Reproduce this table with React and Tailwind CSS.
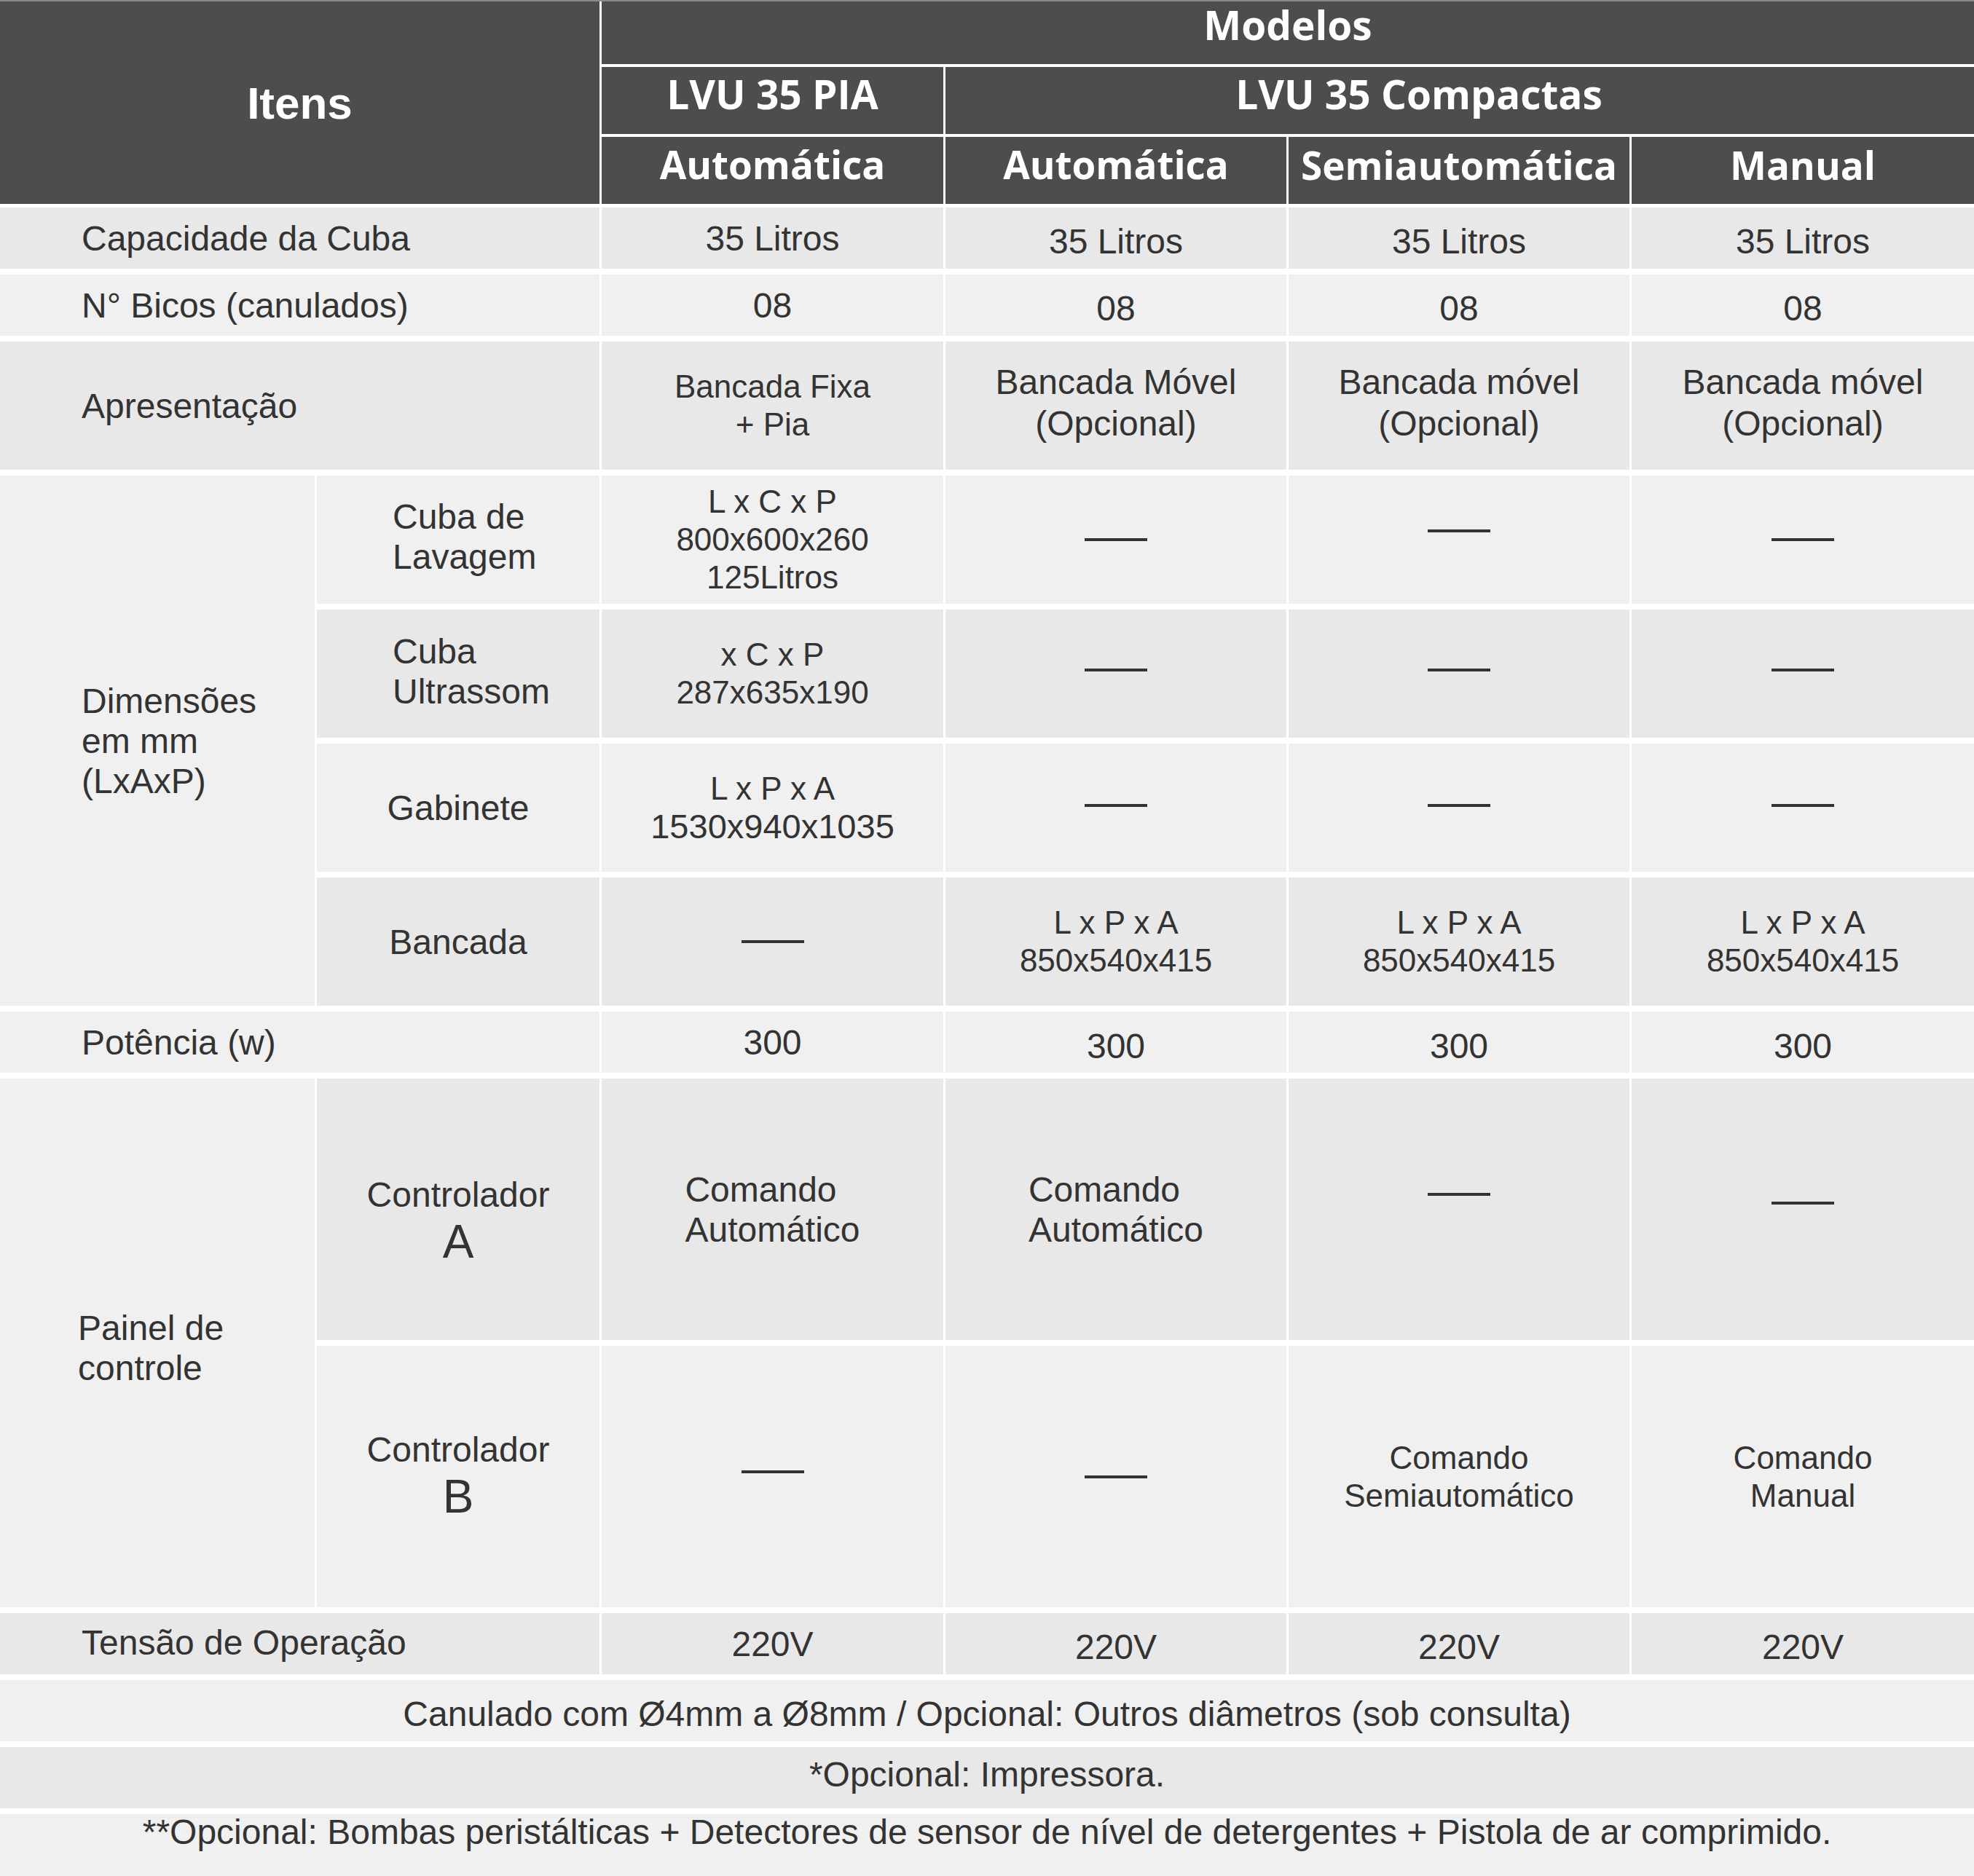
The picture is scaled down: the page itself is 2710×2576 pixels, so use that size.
import React from "react";

const DARK = "bg-[#e8e8e8]";
const LIGHT = "bg-[#f0f0f0]";
const HEAD = "bg-[#4d4d4f] text-white flex items-center justify-center";
const HEAD_FONT = "font-['Open_Sans',sans-serif] font-bold text-[55px] leading-none";
const HEAD_FONT_SM = "font-['Open_Sans',sans-serif] font-bold text-[53px] leading-none";
const COLS = "grid grid-cols-[432px_388px_469px_468px_468px_470px] gap-x-[3px]";

// left aligned label in the "Itens" column
const Label = ({ bg, span, children, className = "" }) => (
  <div className={`${bg} ${span ? "col-span-2" : ""} flex items-center pl-[112px]`}>
    <div className={className}>{children}</div>
  </div>
);

// centered value cell
const Value = ({ bg, children, className = "", outer = "" }) => (
  <div className={`${bg} flex items-center justify-center text-center ${outer}`}>
    <div className={className}>{children}</div>
  </div>
);

const Dash = ({ className = "" }) => (
  <div className={`h-[4px] w-[86px] bg-[#333333] ${className}`} />
);

const SMALL = "text-[44px] leading-[52px]";

const Header = () => (
  <div>
    <div className="h-[2px] bg-[#8a8a8a]" />
    <div className={`${COLS} grid-rows-[86px_92px_92px] gap-y-[4px]`}>
      <div className={`${HEAD} col-span-2 row-span-3 font-['Liberation_Sans',Arial,sans-serif] font-bold text-[62px]`}>
        Itens
      </div>
      <div className={`${HEAD} ${HEAD_FONT} col-span-4 pb-[23px]`}>Modelos</div>
      <div className={`${HEAD} ${HEAD_FONT} pb-[20px]`}>LVU 35 PIA</div>
      <div className={`${HEAD} ${HEAD_FONT} col-span-3 pb-[20px] pr-[112px]`}>LVU 35 Compactas</div>
      <div className={`${HEAD} ${HEAD_FONT_SM} pb-[17px]`}>Automática</div>
      <div className={`${HEAD} ${HEAD_FONT_SM} pb-[17px]`}>Automática</div>
      <div className={`${HEAD} ${HEAD_FONT_SM} pb-[15px]`}>Semiautomática</div>
      <div className={`${HEAD} ${HEAD_FONT_SM} pb-[15px]`}>Manual</div>
    </div>
  </div>
);

export default function App() {
  const models = [0, 1, 2];

  return (
    <div className="w-[2710px] bg-white font-['Liberation_Sans',Arial,sans-serif] text-[#333333]">
      <Header />
      <div
        className={`${COLS} mt-[5px] gap-y-[8px] grid-rows-[84px_84px_176px_176px_176px_176px_176px_84px_359px_359px_84px_84px_84px_85px] text-[48px] leading-[55px]`}
      >
        {/* Capacidade */}
        <Label bg={DARK} span>Capacidade da Cuba</Label>
        <Value bg={DARK}>35 Litros</Value>
        {models.map((m) => (
          <Value key={"cap" + m} bg={DARK} className="translate-y-[4px]">35 Litros</Value>
        ))}

        {/* Bicos */}
        <Label bg={LIGHT} span>N° Bicos (canulados)</Label>
        <Value bg={LIGHT}>08</Value>
        {models.map((m) => (
          <Value key={"bic" + m} bg={LIGHT} className="translate-y-[4px]">08</Value>
        ))}

        {/* Apresentacao */}
        <Label bg={DARK} span>Apresentação</Label>
        <Value bg={DARK} className={SMALL}>
          Bancada Fixa
          <br />+ Pia
        </Value>
        <Value bg={DARK} className="leading-[57px] translate-y-[-4px]">
          Bancada Móvel
          <br />
          (Opcional)
        </Value>
        <Value bg={DARK} className="leading-[57px] translate-y-[-4px]">
          Bancada móvel
          <br />
          (Opcional)
        </Value>
        <Value bg={DARK} className="leading-[57px] translate-y-[-4px]">
          Bancada móvel
          <br />
          (Opcional)
        </Value>

        {/* Dimensoes */}
        <div className={`${LIGHT} row-span-4 flex items-center pl-[112px]`}>
          <div>
            Dimensões
            <br />
            em mm
            <br />
            (LxAxP)
          </div>
        </div>

        <div className={`${LIGHT} flex items-center pl-[104px]`}>
          <div className="translate-y-[-4px]">
            Cuba de
            <br />
            Lavagem
          </div>
        </div>
        <Value bg={LIGHT} className={SMALL}>
          L x C x P
          <br />
          800x600x260
          <br />
          125Litros
        </Value>
        <Value bg={LIGHT}><Dash /></Value>
        <Value bg={LIGHT}><Dash className="translate-y-[-12px]" /></Value>
        <Value bg={LIGHT}><Dash /></Value>

        <div className={`${DARK} flex items-center pl-[104px]`}>
          <div className="translate-y-[-3px]">
            Cuba
            <br />
            Ultrassom
          </div>
        </div>
        <Value bg={DARK} className={SMALL}>
          x C x P
          <br />
          287x635x190
        </Value>
        {models.map((m) => (
          <Value key={"ult" + m} bg={DARK}><Dash className="translate-y-[-5px]" /></Value>
        ))}

        <Value bg={LIGHT}>Gabinete</Value>
        <Value bg={LIGHT} className="leading-[52px]">
          <div className="text-[44px]">L x P x A</div>
          <div className="text-[47px]">1530x940x1035</div>
        </Value>
        {models.map((m) => (
          <Value key={"gab" + m} bg={LIGHT}><Dash className="translate-y-[-3px]" /></Value>
        ))}

        <Value bg={DARK}>Bancada</Value>
        <Value bg={DARK}><Dash /></Value>
        {models.map((m) => (
          <Value key={"ban" + m} bg={DARK} className={SMALL}>
            L x P x A
            <br />
            850x540x415
          </Value>
        ))}

        {/* Potencia */}
        <Label bg={LIGHT} span>Potência (w)</Label>
        <Value bg={LIGHT}>300</Value>
        {models.map((m) => (
          <Value key={"pot" + m} bg={LIGHT} className="translate-y-[5px]">300</Value>
        ))}

        {/* Painel de controle */}
        <div className={`${LIGHT} row-span-2 flex items-center pl-[107px]`}>
          <div className="translate-y-[7px]">
            Painel de
            <br />
            controle
          </div>
        </div>

        <Value bg={DARK} className="translate-y-[17px]">
          <div>Controlador</div>
          <div className="text-[64px] leading-[74px]">A</div>
        </Value>
        <Value bg={DARK} className="text-left">
          Comando
          <br />
          Automático
        </Value>
        <Value bg={DARK} className="text-left">
          Comando
          <br />
          Automático
        </Value>
        <Value bg={DARK}><Dash className="translate-y-[-21px]" /></Value>
        <Value bg={DARK}><Dash className="translate-y-[-9px]" /></Value>

        <Value bg={LIGHT}>
          <div>Controlador</div>
          <div className="text-[64px] leading-[74px]">B</div>
        </Value>
        <Value bg={LIGHT}><Dash className="translate-y-[-7px]" /></Value>
        <Value bg={LIGHT}><Dash /></Value>
        <Value bg={LIGHT} className={SMALL}>
          Comando
          <br />
          Semiautomático
        </Value>
        <Value bg={LIGHT} className={SMALL}>
          Comando
          <br />
          Manual
        </Value>

        {/* Tensao */}
        <Label bg={DARK} span className="translate-y-[-2px]">Tensão de Operação</Label>
        <Value bg={DARK}>220V</Value>
        {models.map((m) => (
          <Value key={"ten" + m} bg={DARK} className="translate-y-[4px]">220V</Value>
        ))}

        {/* notes */}
        <Value bg={LIGHT} outer="col-span-6" className="translate-y-[4px]">
          Canulado com Ø4mm a Ø8mm / Opcional: Outros diâmetros (sob consulta)
        </Value>
        <Value bg={DARK} outer="col-span-6" className="translate-y-[-5px]">
          *Opcional: Impressora.
        </Value>
        <Value bg={LIGHT} outer="col-span-6" className="translate-y-[-18px]">
          **Opcional: Bombas peristálticas + Detectores de sensor de nível de detergentes + Pistola de ar comprimido.
        </Value>
      </div>
    </div>
  );
}
